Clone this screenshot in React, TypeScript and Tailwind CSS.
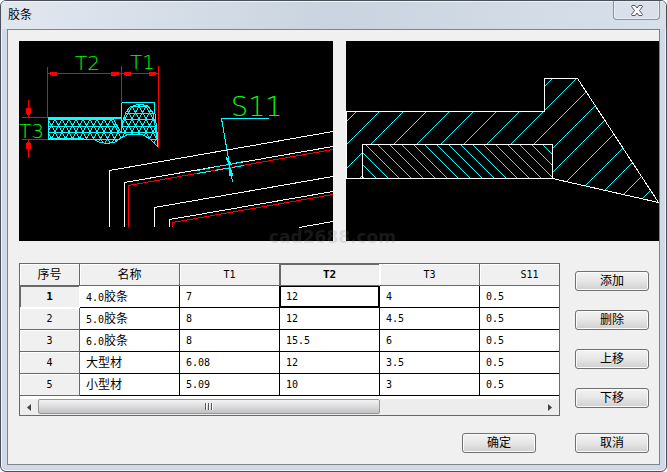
import React from "react";

type Row = { num: string; suffix: string; t: string[] };

const rows: Row[] = [
  { num: "4.0", suffix: "胶条", t: ["7", "12", "4", "0.5"] },
  { num: "5.0", suffix: "胶条", t: ["8", "12", "4.5", "0.5"] },
  { num: "6.0", suffix: "胶条", t: ["8", "15.5", "6", "0.5"] },
  { num: "", suffix: "大型材", t: ["6.08", "12", "3.5", "0.5"] },
  { num: "", suffix: "小型材", t: ["5.09", "10", "3", "0.5"] },
];

const headers = ["T1", "T2", "T3", "S11"];

function PushButton({ children }: { children: React.ReactNode }) {
  return (
    <button
      type="button"
      className="flex h-5 w-[74px] items-center justify-center rounded-[3px] border border-[#707070] bg-linear-to-b from-[#f3f3f3] via-[#e6e6e6] to-[#cfcfcf] text-xs leading-4 text-black shadow-[inset_0_0_0_1px_#fafafa]"
    >
      {children}
    </button>
  );
}

const body =
  "M48 118 H113 L121 133 L123 120 L126 112 L130 107 L139 104 L148 106 L153 113 L155 125 L158 147 L150 139 L143 135 L135 134 L127 135 L121 138 L115 142 L107 143.5 L99 142 L93 139 H48 Z";

function SectionDrawing() {
  return (
    <svg
      viewBox="19 41 314 200"
      className="h-[200px] w-full bg-black"
      fill="none"
      shapeRendering="crispEdges"
      role="img"
      aria-label="T1 T2 T3 S11"
    >
      <defs>
        <pattern id="mesh" x="48" y="119" width="7" height="13" patternUnits="userSpaceOnUse">
          <path d="M0 .5H7M0 7.5H7M0 0L7 13M7 0L0 13" stroke="#00ffff" />
        </pattern>
      </defs>
      <g stroke="#fff">
        <path d="M109.500 227V170.500L333 131.500" />
        <path d="M124.500 227V182.500L333 146.500" />
        <path d="M154.500 227V207.500L333 176.500" />
        <path d="M169.500 227V219.500L333 191.500" />
        <path d="M299 227.500L333 221.500" />
      </g>
      <path d="M128.500 227V185.500L333 149.500M172.500 227V222.500L333 194.500" stroke="#f00" />
      <path d={body} fill="url(#mesh)" stroke="#00ffff" />
      <path d="M48 118H121M48 139H84" stroke="#00ffff" strokeWidth="2" />
      <path d="M121.500 133V102.500H154.500V110L158 140" stroke="#00ffff" />
      <g stroke="#f00">
        <path d="M47.500 67V117M121.500 66V103M158.500 66V148M48 73.500H158" />
        <path d="M22 117.500H48M22 139.500H48M28.500 100V117M28.500 140V158" />
      </g>
      <g fill="#f00">
        <path d="M48 73.500L52 71.500H57V75.500H52ZM121 73.500L117 71.500H111V75.500H117ZM122 73.500L126 71.500H131V75.500H126ZM158 73.500L154 71.500H149V75.500H154Z" />
        <path d="M28.500 117L26 113V108H31V113ZM28.500 140L26 144V149H31V144Z" />
      </g>
      <path d="M269 118.500H221.500L232.500 182" stroke="#00ffff" />
      <path d="M226 157L231 164L229 165ZM229 166L233 175L230 176Z" fill="#00ffff" stroke="#00ffff" />
      <path d="M197 170.500L244 161.500M197 173.500L244 165.500" stroke="#00ffff" strokeDasharray="14 4" />
      <g fill="#00ff00" fontFamily="DejaVu Sans, sans-serif" fontWeight="200">
        <text x="75" y="70" fontSize="20">T2</text>
        <text x="130" y="69" fontSize="20">T1</text>
        <text x="19" y="138" fontSize="20">T3</text>
        <text x="231" y="116" fontSize="27">S11</text>
      </g>
    </svg>
  );
}

function ProfileDrawing() {
  return (
    <svg
      viewBox="346 41 313 200"
      className="h-[200px] w-full bg-black"
      fill="none"
      shapeRendering="crispEdges"
      role="img"
      aria-label="胶条"
    >
      <defs>
        <clipPath id="outer">
          <path d="M346 111H544V78H578L659 203L552 179V144H362V178H346Z" />
        </clipPath>
        <clipPath id="inner">
          <path d="M362 144H553V179H362Z" />
        </clipPath>
      </defs>
      <g clipPath="url(#outer)" stroke="#00ffff">
        {Array.from({ length: 18 }, (_, i) => {
          const s = 468 + Math.round((i * 70) / 3);
          return <line key={i} x1={s - 70} y1={70} x2={s - 210} y2={210} />;
        })}
      </g>
      <g clipPath="url(#inner)" stroke="#00ffff">
        {Array.from({ length: 19 }, (_, i) => {
          const d = 186 + Math.round(i * 11.8);
          return <line key={i} x1={d + 140} y1={140} x2={d + 180} y2={180} />;
        })}
      </g>
      <g stroke="#fff">
        <path d="M346.500 178.500V111.500H544.500V78.500H577.500L658.500 202.500L552.500 178.500Z" />
        <path d="M362.500 178V144.500H552.500V178" />
      </g>
    </svg>
  );
}

function GridTable() {
  return (
    <div className="min-w-0 flex-1 border border-[#696969] bg-white">
      <div className="overflow-hidden pb-[3px]">
        <table className="w-[560px] table-fixed border-separate border-spacing-0 text-black">
          <colgroup>
            <col className="w-[60px]" />
            <col className="w-[100px]" />
            <col className="w-[100px]" />
            <col className="w-[100px]" />
            <col className="w-[100px]" />
            <col className="w-[100px]" />
          </colgroup>
          <thead>
            <tr>
              {["序号", "名称"].map((h) => (
                <th
                  key={h}
                  scope="col"
                  className="h-[22px] border-r border-b border-[#696969] bg-[#f0f0f0] p-0 text-xs leading-4 font-normal shadow-[inset_1px_1px_0_#fff]"
                >
                  {h}
                </th>
              ))}
              {headers.map((h) =>
                h === "T2" ? (
                  <th
                    key={h}
                    scope="col"
                    className="h-[22px] border-r border-b border-r-white border-b-[#696969] bg-[#f0f0f0] p-0 font-['DejaVu_Sans_Mono',monospace] text-[11px] leading-4 font-bold shadow-[inset_1px_1px_0_#696969]"
                  >
                    {h}
                  </th>
                ) : (
                  <th
                    key={h}
                    scope="col"
                    className="h-[22px] border-r border-b border-[#696969] bg-[#f0f0f0] p-0 font-['DejaVu_Sans_Mono',monospace] text-[10px] leading-4 font-normal shadow-[inset_1px_1px_0_#fff]"
                  >
                    {h}
                  </th>
                ),
              )}
            </tr>
          </thead>
          <tbody className="font-['DejaVu_Sans_Mono','Noto_Sans_CJK_SC',monospace] text-[10px] leading-4">
            {rows.map((r, i) => (
              <tr key={i}>
                <th
                  scope="row"
                  className={
                    i === 0
                      ? "h-[22px] border-r border-b border-white bg-[#f0f0f0] p-0 text-[11px] font-bold shadow-[inset_1px_1px_0_#696969]"
                      : "h-[22px] border-r border-b border-[#696969] bg-[#f0f0f0] p-0 font-normal shadow-[inset_1px_1px_0_#fff]"
                  }
                >
                  {i + 1}
                </th>
                <td className="h-[22px] border-r border-b border-black p-0 pt-0.5 pl-1.5">
                  {r.num}
                  <span className="text-xs leading-4">{r.suffix}</span>
                </td>
                {r.t.map((v, j) => (
                  <td
                    key={j}
                    className={
                      i === 0 && j === 1
                        ? "h-[22px] border-r border-b border-black p-0 pl-1.5 shadow-[inset_0_0_0_1px_#000]"
                        : "h-[22px] border-r border-b border-black p-0 pl-1.5"
                    }
                  >
                    {v}
                  </td>
                ))}
              </tr>
            ))}
          </tbody>
        </table>
      </div>
      <div className="flex h-4 items-stretch bg-[#ededed]">
        <button type="button" aria-label="Scroll left" className="flex w-[18px] items-center justify-center">
          <svg width="4" height="7" viewBox="0 0 4 7">
            <path d="M4 0V7L0 3.500Z" fill="#444" />
          </svg>
        </button>
        <div className="flex flex-1">
          <div className="flex h-[15px] w-[68%] items-center justify-center gap-px rounded-[2px] border border-[#979797] bg-linear-to-b from-[#f4f4f4] via-[#dcdcdc] to-[#c2c2c6]">
            <span className="h-[7px] w-0.5 border-r border-[#fff] bg-[#555]" />
            <span className="h-[7px] w-0.5 border-r border-[#fff] bg-[#555]" />
            <span className="h-[7px] w-0.5 border-r border-[#fff] bg-[#555]" />
          </div>
        </div>
        <button type="button" aria-label="Scroll right" className="flex w-[18px] items-center justify-center">
          <svg width="4" height="7" viewBox="0 0 4 7">
            <path d="M0 0V7L4 3.500Z" fill="#444" />
          </svg>
        </button>
      </div>
    </div>
  );
}

export default function App() {
  return (
    <div className="overflow-hidden rounded-[6px] border border-[#4a5058] bg-[#d0dae7] font-['Liberation_Sans','Noto_Sans_CJK_SC',sans-serif] text-xs text-black shadow-[inset_0_0_0_1px_#eef3f9]">
      <header className="flex h-7 items-start justify-between bg-linear-to-r from-[#e2e7ef] via-[#c9d4e0] to-[#d8e0ea] pr-[6px] pl-[7px] shadow-[inset_0_1px_0_#eef3f9]">
        <h1 className="pt-1.5 text-xs leading-4 font-normal">胶条</h1>
        <button
          type="button"
          aria-label="关闭"
          className="flex h-[19px] w-[47px] items-center justify-center rounded-b-[4px] border border-t-0 border-[#8b929c] bg-[#d9e0e9] shadow-[inset_0_0_0_1px_#e9eef4]"
        >
          <svg width="12" height="11" viewBox="0 0 12 11">
            <path
              d="M1 .5H4.200L6 3L7.800 .5H11L11.500 1.500L8.500 5.500L11.500 9.500L11 10.500H7.800L6 8L4.200 10.500H1L.5 9.500L3.500 5.500L.5 1.500Z"
              fill="#f8f8fa"
              stroke="#535666"
            />
          </svg>
        </button>
      </header>
      <main className="mx-[6px] mb-[6px] border border-[#7c848c] bg-[#f0f0f0] pt-[11px] pb-[11px] pl-[11px]">
        <div className="relative grid grid-cols-[314fr_313fr] gap-[13px]">
          <SectionDrawing />
          <ProfileDrawing />
          <span className="pointer-events-none absolute bottom-[-8px] left-1/2 -translate-x-[70px] font-['DejaVu_Sans',sans-serif] text-[17px] leading-6 font-bold text-[#808080]/20">
            cad2688.com
          </span>
        </div>
        <div className="mt-[22px] flex gap-[15px] pr-[10px]">
          <GridTable />
          <div className="flex flex-col gap-[19px] pt-2">
            <PushButton>添加</PushButton>
            <PushButton>删除</PushButton>
            <PushButton>上移</PushButton>
            <PushButton>下移</PushButton>
          </div>
        </div>
        <div className="mt-[17px] flex justify-end gap-[39px] pr-[10px]">
          <PushButton>确定</PushButton>
          <PushButton>取消</PushButton>
        </div>
      </main>
    </div>
  );
}
